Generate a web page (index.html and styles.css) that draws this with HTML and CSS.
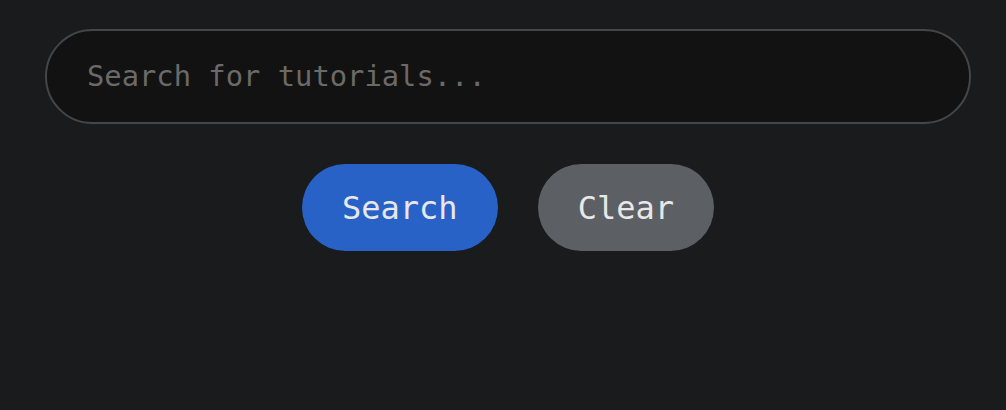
FILE: index.html
```html
<!DOCTYPE html>
<html>
<head>
<meta charset="utf-8">
<link rel="stylesheet" href="styles.css">
</head>
<body>
<div class="search-panel">
  <input class="search-input" type="text" placeholder="Search for tutorials...">
  <div class="actions">
    <button class="btn btn-primary">Search</button>
    <button class="btn btn-secondary">Clear</button>
  </div>
</div>
</body>
</html>
```
FILE: styles.css
```css
html, body {
  margin: 0;
  padding: 0;
  background: #1a1b1d;
  height: 100%;
}
body {
  font-family: "DejaVu Sans Mono", monospace;
}
.search-panel {
  width: 926px;
  margin-left: 45px;
  padding-top: 29px;
  display: flex;
  flex-direction: column;
  gap: 40px;
}
.search-input {
  box-sizing: border-box;
  width: 100%;
  height: 95px;
  padding: 0 40px 2px;
  background: #121212;
  border: 2px solid #43474a;
  border-radius: 48px;
  color: #e6e6e6;
  font-family: "DejaVu Sans Mono", monospace;
  font-size: 28.8px;
  outline: none;
}
.search-input::placeholder {
  color: #6b6a68;
}
.actions {
  display: flex;
  justify-content: center;
  gap: 40px;
}
.btn {
  font-family: "DejaVu Sans Mono", monospace;
  font-size: 32px;
  padding: 0 40px;
  height: 87px;
  border: none;
  border-radius: 44px;
  color: #e8e8e8;
  cursor: pointer;
}
.btn-primary {
  background: #2962c7;
}
.btn-secondary {
  background: #5c6064;
}
```
